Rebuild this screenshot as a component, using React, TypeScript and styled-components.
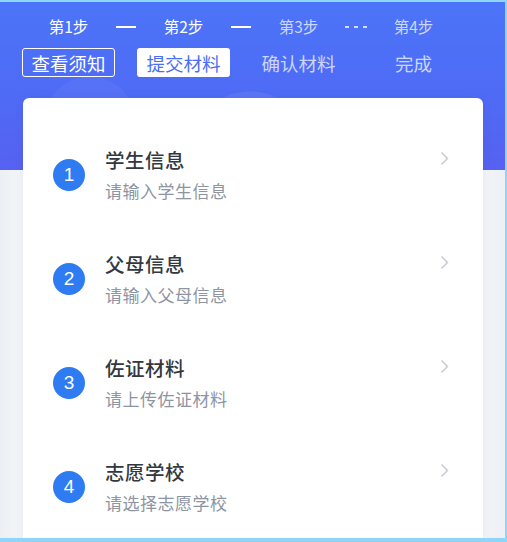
import styled, { createGlobalStyle } from 'styled-components';

const GlobalStyle = createGlobalStyle`
	html, body {
		margin: 0;
		padding: 0;
		background: #f3f5f8;
	}
	* {
		box-sizing: border-box;
	}
`;

type Step = { step: string; label: string; state: 'done' | 'current' | 'todo' };

const steps: Step[] = [
	{ step: '第1步', label: '查看须知', state: 'done' },
	{ step: '第2步', label: '提交材料', state: 'current' },
	{ step: '第3步', label: '确认材料', state: 'todo' },
	{ step: '第4步', label: '完成', state: 'todo' },
];

const connectors = ['solid', 'solid', 'dashed'];

const items = [
	{ title: '学生信息', hint: '请输入学生信息' },
	{ title: '父母信息', hint: '请输入父母信息' },
	{ title: '佐证材料', hint: '请上传佐证材料' },
	{ title: '志愿学校', hint: '请选择志愿学校' },
];

export default function App() {
	return (
		<Page>
			<GlobalStyle />
			<Header>
				<StepRow>
					{steps.map((s, i) => (
						<StepCell key={s.step}>
							<StepName active={s.state !== 'todo'}>{s.step}</StepName>
							{i < connectors.length && (
								<Connector dashed={connectors[i] === 'dashed'} />
							)}
						</StepCell>
					))}
				</StepRow>
				<TabRow>
					{steps.map(s => (
						<TabCell key={s.label}>
							<Tab state={s.state}>{s.label}</Tab>
						</TabCell>
					))}
				</TabRow>
			</Header>
			<Card>
				{items.map((item, i) => (
					<Item key={item.title}>
						<Badge>{i + 1}</Badge>
						<ItemText>
							<ItemTitle>{item.title}</ItemTitle>
							<ItemHint>{item.hint}</ItemHint>
						</ItemText>
						<Chevron width="9" height="15" viewBox="0 0 9 15">
							<path d="M1.5 1.5 L7.5 7.5 L1.5 13.5" fill="none" stroke="#c4c7cc" strokeWidth="1.4" />
						</Chevron>
					</Item>
				))}
			</Card>
		</Page>
	);
}

const Page = styled.div`
	width: 507px;
	height: 542px;
	overflow: hidden;
	border-top: 2px solid #8ed5fa;
	border-right: 2px solid #8ed5fa;
	border-bottom: 4px solid #8ed5fa;
	background: linear-gradient(90deg, #eceff3 0px, #f4f6f9 22px, #f4f6f9 480px, #eceff3 505px);
	font-family: 'Noto Sans CJK SC', 'Noto Sans', sans-serif;
`;

const Header = styled.div`
	height: 168px;
	padding: 12px 0 0 11px;
	background:
		radial-gradient(circle at 250px 150px, rgba(255, 255, 255, 0.07) 0 60px, transparent 61px),
		radial-gradient(circle at 90px 120px, rgba(255, 255, 255, 0.04) 0 45px, transparent 46px),
		linear-gradient(180deg, #4b74f8 0%, #4f6bf5 55%, #5661f0 100%);
`;

const StepRow = styled.div`
	display: grid;
	grid-template-columns: repeat(4, 115px);
	height: 24px;
	align-items: center;
`;

const StepCell = styled.div`
	position: relative;
	display: flex;
	justify-content: center;
	align-items: center;
`;

const StepName = styled.span<{ active: boolean }>`
	font-size: 15.5px;
	line-height: 24px;
	color: ${p => (p.active ? '#ffffff' : 'rgba(255, 255, 255, 0.72)')};
`;

const Connector = styled.span<{ dashed: boolean }>`
	position: absolute;
	right: ${p => (p.dashed ? '-11px' : '-10px')};
	top: 12px;
	width: ${p => (p.dashed ? '22px' : '20px')};
	height: 1.5px;
	background: ${p =>
		p.dashed
			? 'repeating-linear-gradient(90deg, rgba(255,255,255,0.75) 0 4px, transparent 4px 9px)'
			: '#ffffff'};
`;

const TabRow = styled.div`
	display: grid;
	grid-template-columns: repeat(4, 115px);
	margin-top: 10px;
`;

const TabCell = styled.div`
	display: flex;
	justify-content: center;
`;

const Tab = styled.div<{ state: 'done' | 'current' | 'todo' }>`
	height: 29px;
	padding: 0 ${p => (p.state === 'todo' ? '0' : '8px')};
	display: flex;
	align-items: center;
	font-size: 18.5px;
	border-radius: 3px;
	border: ${p => (p.state === 'done' ? '1.5px solid #ffffff' : '1.5px solid transparent')};
	background: ${p => (p.state === 'current' ? '#ffffff' : 'transparent')};
	color: ${p =>
		p.state === 'current' ? '#4a6ef6' : p.state === 'done' ? '#ffffff' : 'rgba(255, 255, 255, 0.72)'};
`;

const Card = styled.div`
	margin: -72px 23px 0 23px;
	padding-top: 24px;
	width: 460px;
	background: #ffffff;
	border-radius: 6px;
	box-shadow: 0 0 10px rgba(60, 70, 120, 0.08);
	height: 480px;
`;

const Item = styled.div`
	height: 104px;
	display: flex;
	align-items: center;
	padding: 0 34px 0 30px;
`;

const Badge = styled.div`
	width: 32px;
	height: 32px;
	flex: none;
	border-radius: 50%;
	background: #2f7cf2;
	color: #ffffff;
	font-family: 'Liberation Sans', Arial, sans-serif;
	font-size: 19px;
	display: flex;
	align-items: center;
	justify-content: center;
	margin-top: 2px;
`;

const ItemText = styled.div`
	flex: 1;
	margin-left: 20px;
	display: flex;
	flex-direction: column;
	gap: 7px;
`;

const ItemTitle = styled.div`
	font-size: 19.5px;
	line-height: 26px;
	font-weight: 500;
	letter-spacing: 0.5px;
	color: #333840;
`;

const ItemHint = styled.div`
	font-size: 17px;
	line-height: 22px;
	letter-spacing: 0.5px;
	color: #8d95a3;
`;

const Chevron = styled.svg`
	flex: none;
	align-self: flex-start;
	margin-top: 29px;
`;
